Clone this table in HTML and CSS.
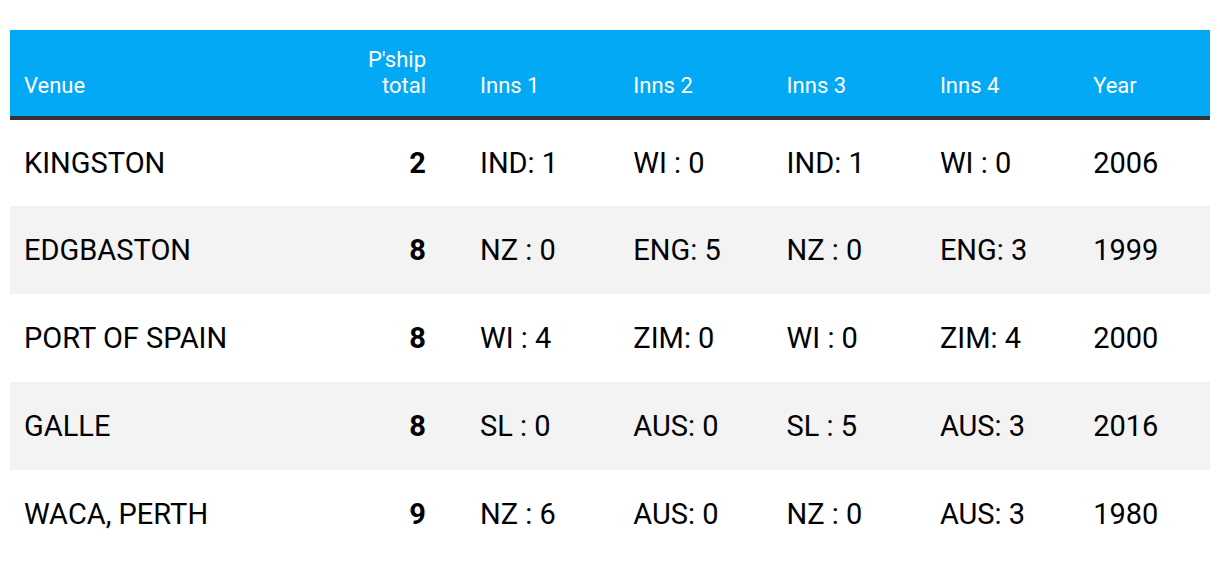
FILE: index.html
```html
<!DOCTYPE html>
<html>
<head>
<meta charset="utf-8">
<link rel="stylesheet" href="styles.css">
</head>
<body>
<table class="stats">
  <colgroup>
    <col class="c-venue">
    <col class="c-total">
    <col class="c-inns">
    <col class="c-inns">
    <col class="c-inns">
    <col class="c-inns">
    <col class="c-year">
  </colgroup>
  <thead>
    <tr>
      <th>Venue</th>
      <th class="num">P'ship<br>total</th>
      <th>Inns 1</th>
      <th>Inns 2</th>
      <th>Inns 3</th>
      <th>Inns 4</th>
      <th>Year</th>
    </tr>
  </thead>
  <tbody>
    <tr>
      <td>KINGSTON</td><td class="num">2</td><td>IND: 1</td><td>WI : 0</td><td>IND: 1</td><td>WI : 0</td><td>2006</td>
    </tr>
    <tr>
      <td>EDGBASTON</td><td class="num">8</td><td>NZ : 0</td><td>ENG: 5</td><td>NZ : 0</td><td>ENG: 3</td><td>1999</td>
    </tr>
    <tr>
      <td>PORT OF SPAIN</td><td class="num">8</td><td>WI : 4</td><td>ZIM: 0</td><td>WI : 0</td><td>ZIM: 4</td><td>2000</td>
    </tr>
    <tr>
      <td>GALLE</td><td class="num">8</td><td>SL : 0</td><td>AUS: 0</td><td>SL : 5</td><td>AUS: 3</td><td>2016</td>
    </tr>
    <tr>
      <td>WACA, PERTH</td><td class="num">9</td><td>NZ : 6</td><td>AUS: 0</td><td>NZ : 0</td><td>AUS: 3</td><td>1980</td>
    </tr>
  </tbody>
</table>
</body>
</html>
```

FILE: styles.css
```css
html, body {
  margin: 0;
  padding: 0;
  background: #ffffff;
}

body {
  padding: 30px 10px 0 10px;
  font-family: Roboto, "Liberation Sans", Arial, sans-serif;
  color: #000;
}

.stats {
  width: 1200px;
  border-collapse: collapse;
  table-layout: fixed;
}

.c-venue { width: 290px; }
.c-total { width: 166px; }
.c-inns { width: 153.3px; }
.c-year { width: 130.8px; }

.stats thead th {
  background: #03a9f4;
  color: #ffffff;
  font-weight: 400;
  font-size: 22px;
  line-height: 26px;
  text-align: left;
  vertical-align: bottom;
  height: 88px;
  box-sizing: border-box;
  padding: 0 14px 17px 14px;
  border-bottom: 4px solid #333333;
}

.stats th.num {
  text-align: right;
  padding-right: 40px;
}

.stats tbody td {
  height: 88px;
  box-sizing: border-box;
  padding: 0 14px;
  font-size: 29px;
  line-height: 32px;
  vertical-align: middle;
  white-space: nowrap;
}

.stats tbody tr:nth-child(even) td {
  background: #f3f3f3;
}

.stats td.num {
  text-align: right;
  font-weight: 700;
  padding-right: 40px;
}
```
